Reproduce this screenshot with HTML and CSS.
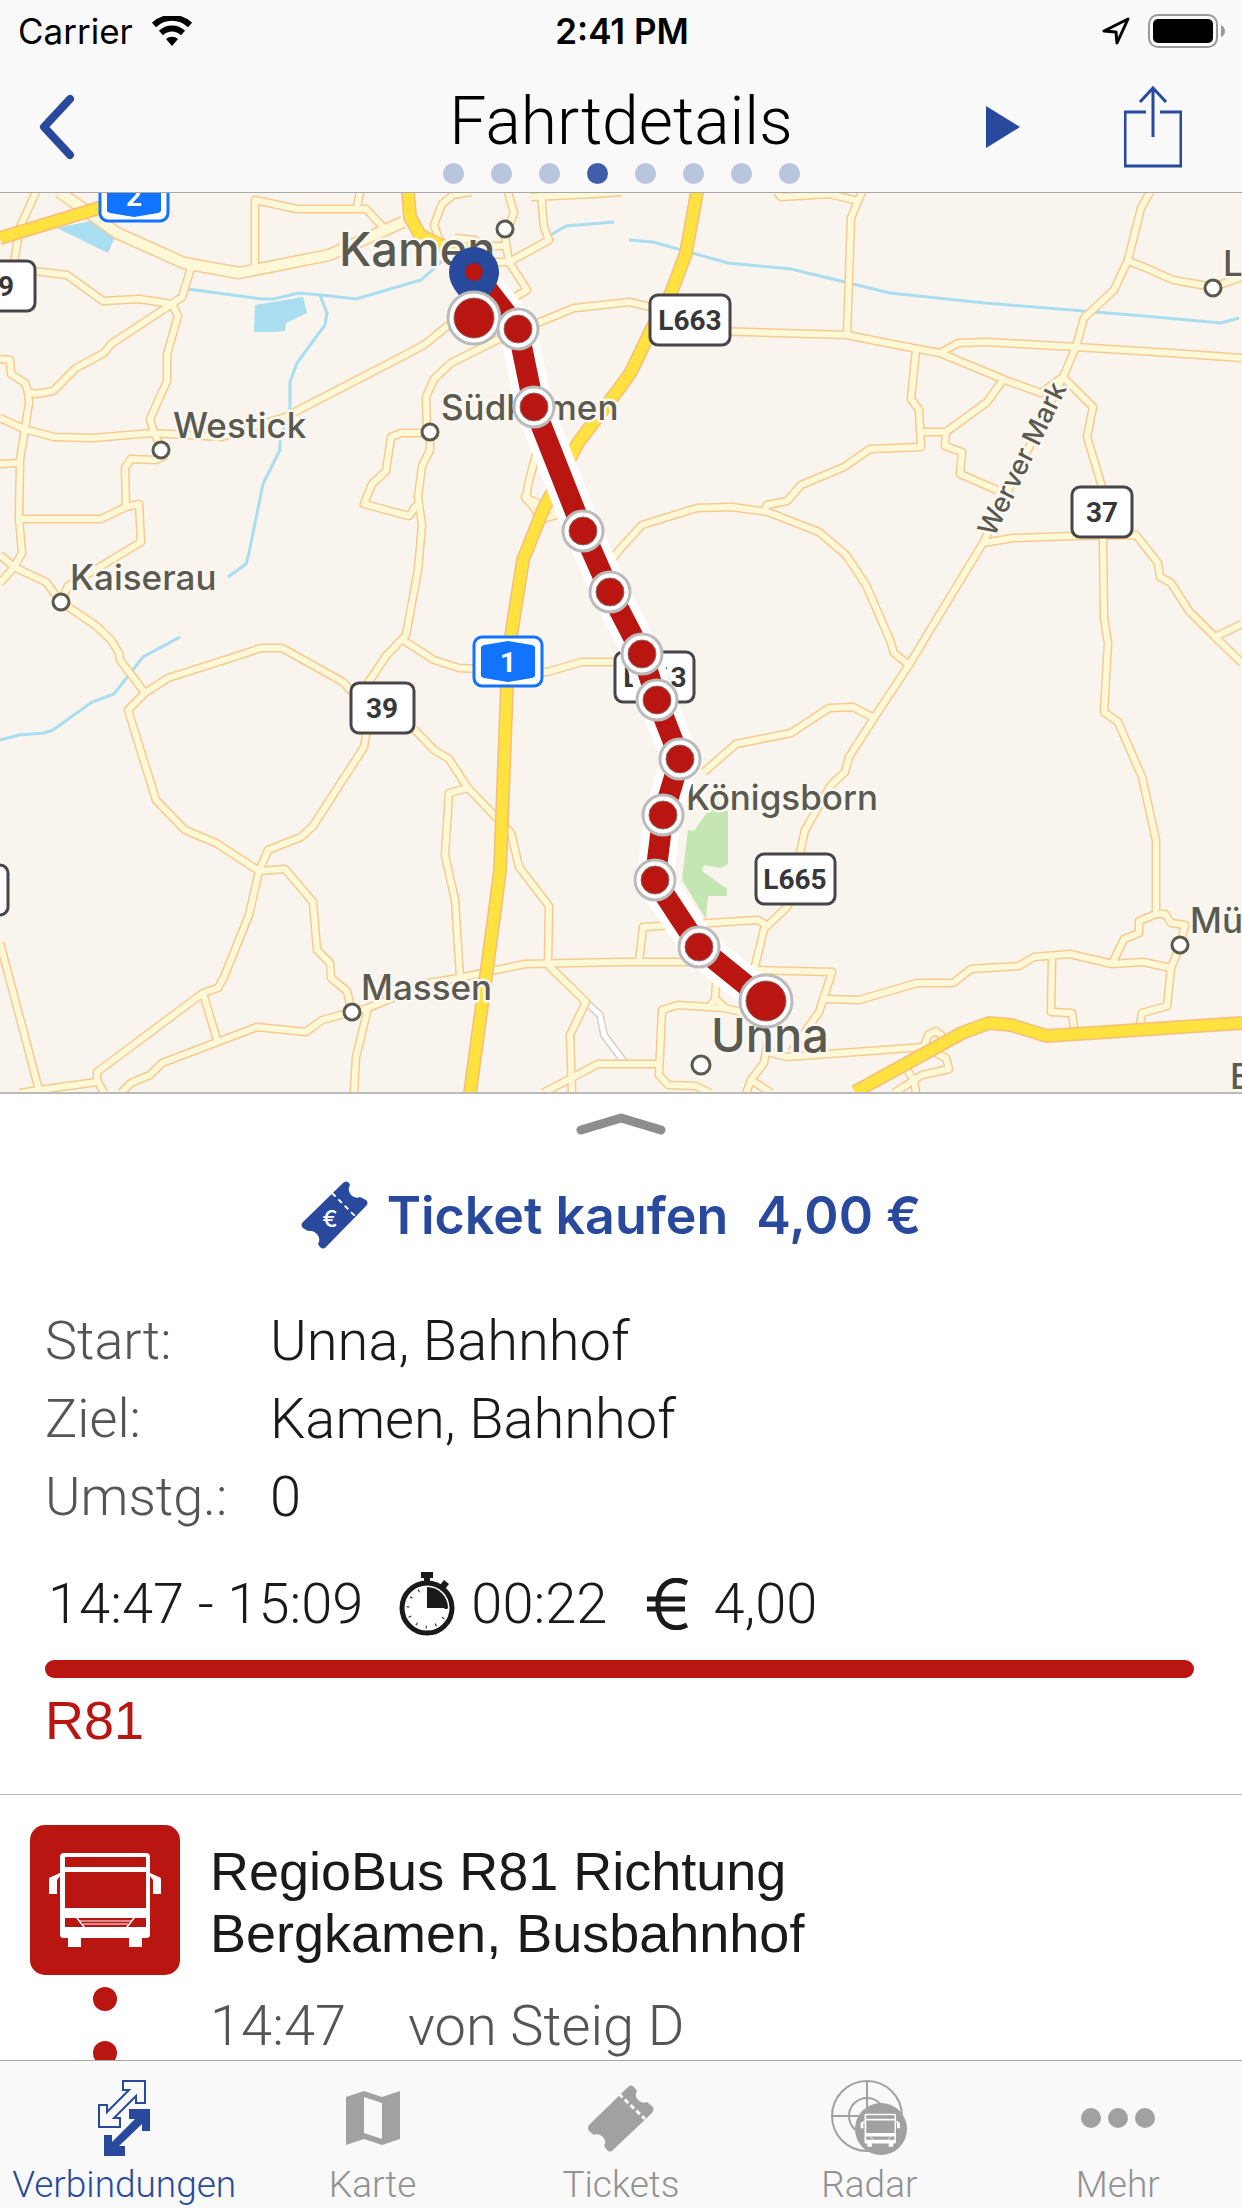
FILE: index.html
```html
<!DOCTYPE html>
<html lang="de">
<head>
    <meta charset="UTF-8">
    <meta name="viewport" content="width=device-width, initial-scale=1.0">
    <title>Fahrtdetails</title>
    <link rel="stylesheet" href="styles.css">
</head>
<body>
    <div class="app">
        <header class="top">
            <div class="status">
                <div class="status-left">
                    <span>Carrier</span>
                    <svg width="42" height="30" viewBox="0 0 42 30" aria-hidden="true">
                        <path d="M21 30l-6-7a9 9 0 0 1 12 0z"/>
                        <path d="M10 17a16 16 0 0 1 22 0M3 9a26 26 0 0 1 36 0" fill="none" stroke="#000" stroke-width="6"/>
                    </svg>
                </div>
                <strong>2:41 PM</strong>
                <div class="status-right">
                    <svg width="28" height="28" viewBox="0 0 28 28" aria-hidden="true">
                        <path d="M26 2L2 14l12 1 1 11z" fill="none" stroke="#000" stroke-width="3" stroke-linejoin="round"/>
                    </svg>
                    <svg width="78" height="34" viewBox="0 0 78 34" aria-hidden="true">
                        <rect x="1" y="1" width="68" height="32" rx="9" fill="none" stroke="#999" stroke-width="2"/>
                        <rect x="5" y="5" width="60" height="24" rx="5"/>
                        <path d="M73 11q4 2 4 6t-4 6z" fill="#999"/>
                    </svg>
                </div>
            </div>
            <div class="navbar">
                <button class="icon-btn back" aria-label="Zurück">
                    <svg width="40" height="66" viewBox="0 0 40 66">
                        <path d="M34 5L8 33l26 28" fill="none" stroke="currentColor" stroke-width="8" stroke-linecap="round" stroke-linejoin="round"/>
                    </svg>
                </button>
                <div class="title">
                    <h1>Fahrtdetails</h1>
                    <div class="pages">
                        <span></span><span></span><span></span><span class="current"></span>
                        <span></span><span></span><span></span><span></span>
                    </div>
                </div>
                <div class="actions">
                    <button class="icon-btn" aria-label="Nächste Fahrt">
                        <svg width="34" height="42" viewBox="0 0 34 42"><path d="M0 0l34 21L0 42z" fill="currentColor"/></svg>
                    </button>
                    <button class="icon-btn" aria-label="Teilen">
                        <svg width="58" height="82" viewBox="0 0 58 82">
                            <path d="M22 26H1v54h56V26H36M29 51V3M16 16L29 2l13 14" fill="none" stroke="currentColor" stroke-width="3"/>
                        </svg>
                    </button>
                </div>
            </div>
        </header>

        <main class="content">
            <div class="map">
                <svg viewBox="0 0 1242 899" preserveAspectRatio="xMidYMid slice">
                    <defs>
                        <g id="roads">
                            <path d="M36-1L20 34 14 69M34 78l33 4 36 26 36-2 33 5 10-7 9-29"/>
                            <path d="M172 111l-61 40-7 9-28 15-23 23-17 3-8-2-3-9-14-9-1-14-10-1M172 111l6 12-11 38v27l-17 38 4 14 7 14"/>
                            <path d="M28 199l1 11-9 57-1 58 3 35-8 14L0 390M0 225l24 11 30 8 39 1 59-5 70 4 63-20 97-50 42-22 27-22 30-16"/>
                            <path d="M0 271l19-1M20 326h81l25-12 13-3 2 38-73 44-7 16M126 314l-1-39 6-9 25 1 10-5"/>
                            <path d="M0 362l14 12 32 15 15 20 34 23 16 15 8 13 1 7 25 33"/>
                            <path d="M255 72V7l42 9h69l17 18M357 14l3-15M453 2l-11 9-8 21 6 17M453 2l18-3"/>
                            <path d="M508-1l6 21-9 24 4 25 18 28-12 7M541 0l3 34 5 13-40 22h-22M531 4l63-3 27-2M455 45l20 2 5 6h25"/>
                            <path d="M777-1l4 5 48-3 29 7M862-1l-4 9-7 17-4 117"/>
                            <path d="M427 240l-1-36 8-18 17-16 46-23 43-18 34-14 47-5 8-1 22 5 28 23 168 5 55 11 38 7 65 27 36 13 22-16 13-30 8-29 30-28 14-30 13-52 9-16"/>
                            <path d="M940 160l18-10 29-1 89 5 95 6 71 5M1128 68l16 6 29 13 40 7 29-10"/>
                            <path d="M916 157l-5 49 8 11 2 37-51 2-26 18-43 18-14 16-20 4-3 6M921 239h25l41-30 16-22M946 239l-1 14 17 6-2 22 37 16"/>
                            <path d="M612 366l9-11 21-23 55-17 35-1 36 5 51 20 27 23 20 30 24 55 4 13 15 12"/>
                            <path d="M1063 184L983 350l-59 97-15 25-35 53-25 39-4 15-14 13-26 45-5 23-1 30-12 24-23 22-10 41"/>
                            <path d="M983 350l30-5 60-2 63-1 22 28 2 14 11 6 18 28 26 26 27-13M1215 444l27 26"/>
                            <path d="M1063 184l30 30-6 30 15 50 1 50 1 81 4 25-4 69 14 10 24 55 14 63v73"/>
                            <path d="M430 240h-29l-10 4-5 34-14 13-8 20 45 12 7-10 6 1"/>
                            <path d="M430 240v17l-8 16-4 31 4 28-4 45-12 65-20 21-18 27-2 52-2 12-51 79-12 11-33 13-9 21-10 44-25 62-6 11-15 5L97 879v8l7 13"/>
                            <path d="M403 447l31 20 25 8 88 4 35-10h39l20-10M145 500l23-15 66-21 27-9h21l61 34 9 10"/>
                            <path d="M145 500l-17 17 28 90 29 30 31 13 43 28 26-2 28 33 4 48 13 13 1 15 16 13 5 21"/>
                            <path d="M414 536l20 21 15 9 19 29 43 45 8 34 30 39-1 59 38 37-16 33 2 58M468 595l-19 5-4 62 10 45 5 77"/>
                            <path d="M352 819l16-4 60-25 31-5 66-14 96-2h79l56 8 76 2-13 40-28 40"/>
                            <path d="M352 819l-30 8-16 12-49-5-95 36-12 12-19 8-10 10M203 800l14 47M0 750l39 147 58-8M20 900l19-3M368 815l-12 49-2 36M543 900l55-29h61"/>
                            <path d="M538 313l-12-7 2-14 12-46M535 316l-10-12 35 17-20 6z"/>
                            <path d="M704 579l32-28 55-11 38-25 24-1 21 11M639 769l4-35 115-7 8 5"/>
                            <path d="M740 819l-15-4-47-3-16 5-3 65 9 10 28 1 14 7M716 790l-1 17-5 6M715 805l10 10M768 844l-4 26-13 17-5 13M751 887l20 13"/>
                            <path d="M768 859l19 5 137-10 4-12 8-4 7 6M934 859l12 6 3 11-27 6-28 18M907 877l7 10 2 13"/>
                            <path d="M825 806l34 1 58-17h36l18-14 48-3 15-9 36-3 42 10 31-2 28 6M1052 765l-1 54 21 1 2 15"/>
                            <path d="M1112 771l12-25 15-6v-12l17-7h9l6 9 14 2-5 20-9 23-4 38-25 7-2 12"/>
                        </g>
                        <path id="main-road" d="M59-1l22 15 36 26 67 30 55 10 90-18 74-33"/>
                        <g id="motorways">
                            <path d="M697-1l-11 61-15 40-20 37-20 42-10 14-43 57-35 67-20 50-12 76-3 24-8 210-6 47-24 176"/>
                            <path d="M0 45l99-30 61-20M408-1l2 25 10 18 20 10 35 10"/>
                            <path d="M855 899l107-59 27-10 22 2 36 11 195-13"/>
                        </g>
                    </defs>

                    <rect width="1242" height="899" fill="#f9f4ed"/>
                    <g class="water">
                        <path d="M57 35l38-8 20 17-7 16zM255 112l48-8 4 16-21 10-1 8-12 1h-19z"/>
                        <path class="river" d="M188 96l73 10h12l26-6 22 2 35 4 65-19 26-23M549 43l17-10 48-4M629 47l24 2 75 21 63 6 99 24 95 10 159 13 77 7 18-5"/>
                        <path class="river" d="M320 102l7 18-2 12-28 38-7 19v31l-10 24v13l-17 34-14 69-3 11-18 13M180 444l-37 20-29 37-22 8-39 28-9 3-25 2-19 5"/>
                    </g>
                    <path d="M688 637l6 1 22-31 12 12v52l-8 4-16-3-2 6 25 18v7h-19l-2 23-24-39z" fill="#c3e6b2"/>
                    <path d="M586 809l14 13 4 20 21 28" fill="none" stroke="#d4d0ca" stroke-width="8"/>
                    <path d="M586 809l14 13 4 20 21 28" fill="none" stroke="#fff" stroke-width="5"/>
                    <use href="#roads" class="road-edge"/>
                    <use href="#main-road" class="road-edge wide"/>
                    <use href="#roads" class="road"/>
                    <use href="#main-road" class="road wide"/>
                    <use href="#motorways" class="motorway-edge"/>
                    <use href="#motorways" class="motorway"/>

                    <g class="shields">
                        <rect x="-30" y="68" width="65" height="50" rx="8"/><text x="6" y="103">9</text>
                        <rect x="650" y="102" width="80" height="50" rx="8"/><text x="690" y="137">L663</text>
                        <rect x="1072" y="294" width="60" height="50" rx="8"/><text x="1102" y="329">37</text>
                        <rect x="351" y="490" width="63" height="50" rx="8"/><text x="382" y="525">39</text>
                        <rect x="615" y="459" width="79" height="50" rx="8"/><text x="655" y="494">L663</text>
                        <rect x="756" y="661" width="79" height="50" rx="8"/><text x="795" y="696">L665</text>
                        <rect x="-30" y="672" width="38" height="50" rx="8"/>
                    </g>
                    <g class="autobahn">
                        <rect x="474" y="444" width="68" height="49" rx="8"/>
                        <path d="M481 454q0-1 3-2l24-4 24 4q3 1 3 2v29q0 1-3 2l-24 4-24-4q-3-1-3-2z"/>
                        <text x="508" y="479">1</text>
                        <rect x="100" y="-21" width="68" height="49" rx="8"/>
                        <path d="M107-11h54v29q0 1-3 2l-24 4-24-4q-3-1-3-2z"/>
                        <text x="134" y="13">2</text>
                    </g>

                    <g class="towns">
                        <circle cx="161" cy="257" r="8"/>
                        <circle cx="505" cy="36" r="8"/>
                        <circle cx="430" cy="239" r="8"/>
                        <circle cx="61" cy="409" r="8"/>
                        <circle cx="352" cy="819" r="8"/>
                        <circle cx="701" cy="872" r="9"/>
                        <circle cx="1180" cy="752" r="8"/>
                        <circle cx="1213" cy="95" r="8"/>
                    </g>
                    <g class="labels">
                        <text class="city" x="339" y="73">Kamen</text>
                        <text class="city" x="711" y="859">Unna</text>
                        <text x="173" y="245">Westick</text>
                        <text x="70" y="397">Kaiserau</text>
                        <text x="441" y="227">Südkamen</text>
                        <text x="361" y="807">Massen</text>
                        <text x="878" y="617" text-anchor="end">Königsborn</text>
                        <text x="1223" y="83">L</text>
                        <text x="1190" y="740">Mü</text>
                        <text x="1230" y="896">E</text>
                        <text class="street" transform="translate(994 345) rotate(-64)">Werver Mark</text>
                    </g>

                    <path class="route-edge" d="M474 79l44 57 16 78 49 124 27 61 32 62 15 46 23 59-17 56-8 65 44 67 67 54"/>
                    <path class="route" d="M474 79l44 57 16 78 49 124 27 61 32 62 15 46 23 59-17 56-8 65 44 67 67 54"/>
                    <path d="M474 125c-6-18-25-27-25-46a25 25 0 0 1 50 0c0 19-19 28-25 46z" fill="#294a9c"/>
                    <circle cx="474" cy="79" r="9" fill="#b91511" stroke="#5e3259"/>
                    <g class="stops">
                        <circle cx="474" cy="125" r="26"/><circle class="dot" cx="474" cy="125" r="20"/>
                        <circle cx="518" cy="136" r="20"/><circle class="dot" cx="518" cy="136" r="14"/>
                        <circle cx="534" cy="214" r="20"/><circle class="dot" cx="534" cy="214" r="14"/>
                        <circle cx="583" cy="338" r="20"/><circle class="dot" cx="583" cy="338" r="14"/>
                        <circle cx="610" cy="399" r="20"/><circle class="dot" cx="610" cy="399" r="14"/>
                        <circle cx="642" cy="461" r="20"/><circle class="dot" cx="642" cy="461" r="14"/>
                        <circle cx="657" cy="507" r="20"/><circle class="dot" cx="657" cy="507" r="14"/>
                        <circle cx="680" cy="566" r="20"/><circle class="dot" cx="680" cy="566" r="14"/>
                        <circle cx="663" cy="622" r="20"/><circle class="dot" cx="663" cy="622" r="14"/>
                        <circle cx="655" cy="687" r="20"/><circle class="dot" cx="655" cy="687" r="14"/>
                        <circle cx="699" cy="754" r="20"/><circle class="dot" cx="699" cy="754" r="14"/>
                        <circle cx="766" cy="808" r="26"/><circle class="dot" cx="766" cy="808" r="20"/>
                    </g>
                </svg>
            </div>

            <button class="handle" aria-label="Karte verkleinern">
                <svg width="90" height="24" viewBox="0 0 90 24">
                    <path d="M5 18l40-12 40 12" fill="none" stroke="#8e8e8e" stroke-width="9" stroke-linecap="round" stroke-linejoin="round"/>
                </svg>
            </button>

            <button class="buy">
                <svg width="68" height="68" viewBox="0 0 68 68" aria-hidden="true">
                    <path d="M42 2q3-3 6 0l1 2q-3 5 1 10 4 4 9 2l6 3q3 3 0 6L25 66q-3 3-6 0l-2-3q3-5-1-10-4-4-9-3l-5-3q-3-3 0-6z" fill="currentColor"/>
                    <path d="M31 12l24 24" stroke="#fff" stroke-width="2" stroke-dasharray="5 4"/>
                    <text x="29" y="46" class="euro-mark">€</text>
                </svg>
                <span>Ticket kaufen</span>
                <span>4,00 €</span>
            </button>

            <section class="summary">
                <dl>
                    <dt>Start:</dt><dd>Unna, Bahnhof</dd>
                    <dt>Ziel:</dt><dd>Kamen, Bahnhof</dd>
                    <dt>Umstg.:</dt><dd>0</dd>
                </dl>
                <div class="facts">
                    <span class="times">14:47 - 15:09</span>
                    <svg width="56" height="64" viewBox="0 0 56 64" aria-hidden="true">
                        <path d="M22 0h12v6h-3v6h-6V6h-3zM41 13l4-5 5 4-4 5z" fill="#1a1a1a"/>
                        <circle cx="28" cy="36" r="25" fill="#fff" stroke="#1a1a1a" stroke-width="5"/>
                        <circle cx="28" cy="36" r="19" fill="none" stroke="#1a1a1a" stroke-width="3" stroke-dasharray="1 9"/>
                        <path d="M28 36V15a21 21 0 0 1 21 21z" fill="#1a1a1a"/>
                    </svg>
                    <span class="duration">00:22</span>
                    <svg width="42" height="52" viewBox="0 0 42 52" aria-hidden="true">
                        <path d="M40 5C28-1 11 2 11 26s17 27 29 21M0 21h38M0 31h38" fill="none" stroke="#1a1a1a" stroke-width="5"/>
                    </svg>
                    <span class="price">4,00</span>
                </div>
                <div class="bar"></div>
                <p class="line">R81</p>
            </section>

            <section class="leg">
                <div class="rail">
                    <svg width="150" height="150" viewBox="0 0 150 150" aria-label="Bus">
                        <rect width="150" height="150" rx="15" fill="#b91511"/>
                        <path id="bus" fill="#fff" fill-rule="evenodd" d="M34 28h82q4 0 4 4v16l9 4q2 0 2 3v14h-8V55l-3-4v59q0 3-4 3h-4v9H99v-9H51v9H38v-9h-4q-4 0-4-3V51l-3 4v14h-8V55q0-3 2-3l9-4V32q0-4 4-4zM35 32v10h81V32zM35 47v36h81V47zM35 93v9h18l-7-9zM48 93l7 9h41l7-9zM105 93l-7 9h18v-9z"/>
                        <path d="M50 96h51M53 99h45" stroke="#fff"/>
                    </svg>
                    <i></i><i></i>
                </div>
                <div class="leg-text">
                    <h2>RegioBus R81 Richtung<br>Bergkamen, Busbahnhof</h2>
                    <p><time>14:47</time><span>von Steig D</span></p>
                </div>
            </section>
        </main>

        <nav class="tabs">
            <a href="#verbindungen" class="active">
                <svg width="52" height="76" viewBox="0 0 52 76">
                    <path d="M25 1h22v22h-9v-7L16 38h6v9H1V25h8v7l22-22h-6z" fill="none" stroke="currentColor" stroke-width="2"/>
                    <path d="M31 29h21v22h-8v-7L21 66h6v10H6V55h8v7l23-23h-6z" fill="currentColor"/>
                </svg>
                Verbindungen
            </a>
            <a href="#karte">
                <svg width="54" height="76" viewBox="0 0 54 76">
                    <path d="M0 17l18-6 18 6 18-6v48l-18 6-18-6-18 6zM18 17v36l18 6V23z" fill="#a1a1a1" fill-rule="evenodd"/>
                </svg>
                Karte
            </a>
            <a href="#tickets">
                <svg width="66" height="76" viewBox="0 0 66 76">
                    <path d="M40 7q3-3 6 0l3 4q-3 5 1 9 4 4 9 2l5 4q3 3 0 7L25 70q-3 3-6 0l-3-4q3-5-1-9-4-4-9-2l-5-4q-2-3 0-6z" fill="#a1a1a1"/>
                    <path d="M31 14l26 25" stroke="#f9f9f9" stroke-width="3" stroke-dasharray="5 3"/>
                </svg>
                Tickets
            </a>
            <a href="#radar">
                <svg width="76" height="76" viewBox="0 0 76 76">
                    <path d="M36 1v35M1 36h35" stroke="#a1a1a1" stroke-width="2"/>
                    <circle cx="36" cy="36" r="35" fill="none" stroke="#a1a1a1" stroke-width="2"/>
                    <circle cx="36" cy="36" r="18" fill="none" stroke="#a1a1a1" stroke-width="2"/>
                    <circle cx="50" cy="49" r="26" fill="#a1a1a1"/>
                    <use href="#bus" transform="translate(23 24) scale(.35)"/>
                </svg>
                Radar
            </a>
            <a href="#mehr">
                <svg width="74" height="76" viewBox="0 0 74 76">
                    <g fill="#a1a1a1"><circle cx="10" cy="38" r="10"/><circle cx="37" cy="38" r="10"/><circle cx="64" cy="38" r="10"/></g>
                </svg>
                Mehr
            </a>
        </nav>
    </div>
</body>
</html>
```
FILE: styles.css
```css
* {
    margin: 0;
    padding: 0;
    box-sizing: border-box;
}

body {
    font-family: Roboto, "Liberation Sans", sans-serif;
    font-weight: 300;
    font-size: 56px;
    color: #1a1a1a;
    background: #fff;
}

svg {
    display: block;
    flex: none;
}

button {
    border: none;
    background: none;
    color: #294a9c;
    cursor: pointer;
}

.app {
    height: 100vh;
    display: flex;
    flex-direction: column;
}

/* Status bar and navigation */
.top {
    flex: none;
    background: #f9f9f9;
    border-bottom: 1px solid #a8a8a8;
}

.status {
    display: grid;
    grid-template-columns: 1fr auto 1fr;
    align-items: center;
    height: 62px;
    padding: 0 16px 0 18px;
    font-family: Inter, sans-serif;
    font-size: 35px;
    font-weight: 400;
    color: #000;
}

.status strong {
    font-weight: 600;
}

.status-left,
.status-right {
    display: flex;
    align-items: center;
    gap: 18px;
}

.status-right {
    justify-content: flex-end;
}

.navbar {
    display: grid;
    grid-template-columns: 1fr auto 1fr;
    height: 130px;
    padding: 0 36px;
}

.icon-btn {
    display: flex;
    align-items: center;
}

.title {
    text-align: center;
}

.title h1 {
    height: 101px;
    padding-top: 20px;
    font-size: 66px;
    font-weight: 300;
    line-height: 80px;
    color: #000;
}

.pages {
    display: flex;
    justify-content: center;
    gap: 27px;
}

.pages span {
    width: 21px;
    height: 21px;
    border-radius: 50%;
    background: #b9c4de;
}

.pages .current {
    background: #3f5da8;
}

.actions {
    display: flex;
    justify-content: flex-end;
    gap: 104px;
    padding-right: 24px;
}

/* Map */
.content {
    flex: 1;
    min-height: 0;
    overflow-y: auto;
    scrollbar-width: none;
}

.map {
    border-bottom: 2px solid #bbb;
}

.map svg {
    width: 100%;
    height: auto;
}

.water path {
    fill: #a9ddf0;
}

.water .river {
    fill: none;
    stroke: #a9ddf0;
    stroke-width: 3;
}

.road-edge,
.road,
.motorway-edge,
.motorway {
    fill: none;
    stroke-linejoin: round;
}

.road-edge {
    stroke: #f7ca90;
    stroke-width: 9;
}

.road {
    stroke: #fdf9d8;
    stroke-width: 6;
}

.road-edge.wide {
    stroke-width: 13;
}

.road.wide {
    stroke-width: 10;
}

.motorway-edge {
    stroke: #f6bd7c;
    stroke-width: 14;
}

.motorway {
    stroke: #ffe140;
    stroke-width: 11;
}

.shields rect {
    fill: #fff;
    stroke: #46464a;
    stroke-width: 3;
}

.shields text,
.autobahn text {
    font-family: "Liberation Sans Narrow", Roboto, sans-serif;
    font-size: 28px;
    font-weight: 700;
    text-anchor: middle;
    fill: #37373a;
}

.autobahn rect {
    fill: #fff;
    stroke: #1273ff;
    stroke-width: 3;
}

.autobahn path {
    fill: #1273ff;
}

.autobahn text {
    fill: #fff;
}

.towns circle {
    fill: #fff;
    stroke: #5b5a50;
    stroke-width: 3;
}

.labels text {
    font-family: Inter, sans-serif;
    font-size: 35px;
    font-weight: 500;
    fill: #5b5a50;
    stroke: #fbf8f3;
    stroke-width: 5;
    stroke-linejoin: round;
    paint-order: stroke;
}

.labels .city {
    font-size: 47px;
}

.labels .street {
    font-size: 27px;
}

.route-edge,
.route {
    fill: none;
    stroke: #fff;
    stroke-width: 37;
    stroke-linejoin: round;
}

.route {
    stroke: #b91511;
    stroke-width: 21;
}

.stops circle {
    fill: #fff;
    stroke: #bbb;
    stroke-width: 3;
}

.stops .dot {
    fill: #b91511;
    stroke: #8d6a68;
    stroke-width: 1;
}

/* Trip summary */
.handle {
    display: block;
    margin: 18px auto 0;
}

.buy {
    display: flex;
    align-items: center;
    justify-content: center;
    width: 100%;
    height: 68px;
    margin-top: 45px;
    padding-right: 20px;
    gap: 28px;
    font-family: Inter, sans-serif;
    font-size: 52px;
    font-weight: 600;
}

.buy svg {
    margin-right: -10px;
}

.euro-mark {
    font-size: 23px;
    font-weight: 500;
    text-anchor: middle;
    fill: #fff;
}

.summary {
    padding: 53px 48px 32px 45px;
    border-bottom: 1px solid #bbb;
}

dl {
    display: grid;
    grid-template-columns: 225px 1fr;
    line-height: 78px;
}

dt {
    font-size: 54px;
    color: #555;
}

.facts {
    display: flex;
    align-items: center;
    height: 64px;
    margin-top: 36px;
}

.times {
    margin-right: 36px;
    margin-left: 3px;
}

.duration {
    margin: 0 40px 0 16px;
}

.price {
    margin-left: 24px;
}

.bar {
    height: 18px;
    margin-top: 24px;
    border-radius: 9px;
    background: #b91511;
}

.line {
    font-family: "Liberation Sans", sans-serif;
    font-size: 54px;
    font-weight: 400;
    line-height: 84px;
    color: #b91511;
}

.leg {
    display: flex;
    gap: 30px;
    padding: 30px;
}

.rail {
    display: flex;
    flex-direction: column;
    align-items: center;
}

.rail i {
    width: 24px;
    height: 24px;
    margin: 12px 0 18px;
    border-radius: 50%;
    background: #b91511;
}

.leg h2 {
    font-family: "Liberation Sans", sans-serif;
    font-size: 54px;
    font-weight: 400;
    line-height: 62px;
    padding-top: 15px;
}

.leg p {
    display: flex;
    gap: 62px;
    line-height: 64px;
    padding-top: 30px;
    color: #555;
}

/* Tab bar */
.tabs {
    flex: none;
    display: grid;
    grid-template-columns: repeat(5, 1fr);
    height: 148px;
    padding-top: 19px;
    background: #f9f9f9;
    border-top: 1px solid #a8a8a8;
}

.tabs a {
    display: flex;
    flex-direction: column;
    align-items: center;
    gap: 8px;
    font-size: 37px;
    line-height: 42px;
    color: #929292;
    text-decoration: none;
}

.tabs .active {
    color: #294a9c;
}
```
